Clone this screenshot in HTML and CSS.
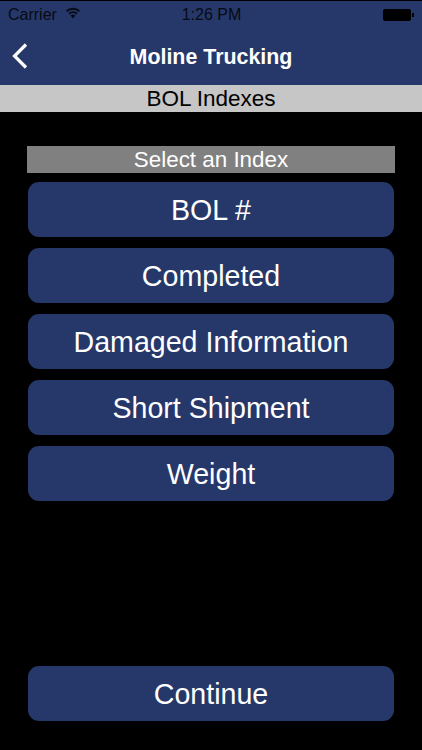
FILE: index.html
```html
<!DOCTYPE html>
<html lang="en">
<head>
<meta charset="utf-8">
<title>Moline Trucking</title>
<link rel="stylesheet" href="styles.css">
</head>
<body>
<div class="screen">
  <header class="header">
    <div class="status">
      <div class="status-left">
        <span>Carrier</span>
        <svg class="wifi" viewBox="0 0 16 12" width="16" height="12"><path d="M8 11.500 5.600 8.600a3.400 3.400 0 0 1 4.800 0ZM4.600 7.500 3.400 6.100a6.600 6.600 0 0 1 9.200 0l-1.200 1.400a4.800 4.800 0 0 0-6.800 0ZM2.400 5 1 3.500a10 10 0 0 1 14 0L13.600 5a8 8 0 0 0-11.200 0Z" fill="#060a14"/></svg>
      </div>
      <span class="time">1:26 PM</span>
      <div class="battery"><span class="cell"></span><span class="nub"></span></div>
    </div>
    <div class="nav">
      <svg class="back" viewBox="0 0 18 28" width="18" height="28"><path d="M15 2.500 3.500 14 15 25.500" fill="none" stroke="#fff" stroke-width="3.200"/></svg>
      <h1 class="title">Moline Trucking</h1>
    </div>
  </header>
  <div class="subtitle">BOL Indexes</div>
  <main class="content">
    <div class="select-label">Select an Index</div>
    <div class="list">
      <button class="btn">BOL #</button>
      <button class="btn">Completed</button>
      <button class="btn">Damaged Information</button>
      <button class="btn">Short Shipment</button>
      <button class="btn">Weight</button>
    </div>
    <button class="btn continue">Continue</button>
  </main>
</div>
</body>
</html>
```
FILE: styles.css
```css
* { box-sizing: border-box; }
html, body { margin: 0; padding: 0; background: #000; }
.screen {
  width: 422px;
  height: 750px;
  display: flex;
  flex-direction: column;
  overflow: hidden;
  font-family: "Liberation Sans", Arial, sans-serif;
  background: #000;
}
.header {
  height: 85px;
  background: #263869;
  border-top: 1px solid #000;
  flex: none;
}
.status {
  height: 28px;
  padding: 0 8px 0 8px;
  display: flex;
  align-items: center;
  justify-content: space-between;
  position: relative;
  color: #060a14;
  font-size: 16px;
}
.status-left { display: flex; align-items: center; gap: 8px; }
.wifi { display: block; margin-top: -5px; }
.time {
  position: absolute;
  left: 1px;
  right: 0;
  text-align: center;
  font-weight: 400;
}
.battery { display: flex; align-items: center; }
.cell { width: 28px; height: 12px; background: #000; border-radius: 2px; display: block; }
.nub { width: 2px; height: 4px; background: #000; display: block; margin-left: 1px; }
.nav {
  height: 56px;
  position: relative;
  display: flex;
  align-items: center;
  justify-content: center;
}
.back { position: absolute; left: 11px; top: 13px; display: block; }
.title {
  margin: 0;
  color: #fff;
  font-size: 21.400px;
  font-weight: 700;
}
.subtitle {
  height: 27px;
  flex: none;
  background: #c6c6c6;
  color: #000;
  font-size: 22.500px;
  line-height: 28px;
  text-align: center;
}
.content {
  flex: 1;
  padding: 34px 28px 29px;
  display: flex;
  flex-direction: column;
}
.select-label {
  height: 27px;
  margin: 0 -1px 9px;
  background: #808080;
  color: #fff;
  font-size: 22.400px;
  line-height: 28px;
  text-align: center;
  flex: none;
}
.list { display: flex; flex-direction: column; gap: 11px; flex: 1; }
.btn {
  display: block;
  width: 100%;
  height: 55px;
  border: 0;
  border-radius: 11px;
  background: #263869;
  color: #fff;
  font-family: inherit;
  font-size: 28.600px;
  padding: 2px 0 0;
  text-align: center;
  flex: none;
}
```
